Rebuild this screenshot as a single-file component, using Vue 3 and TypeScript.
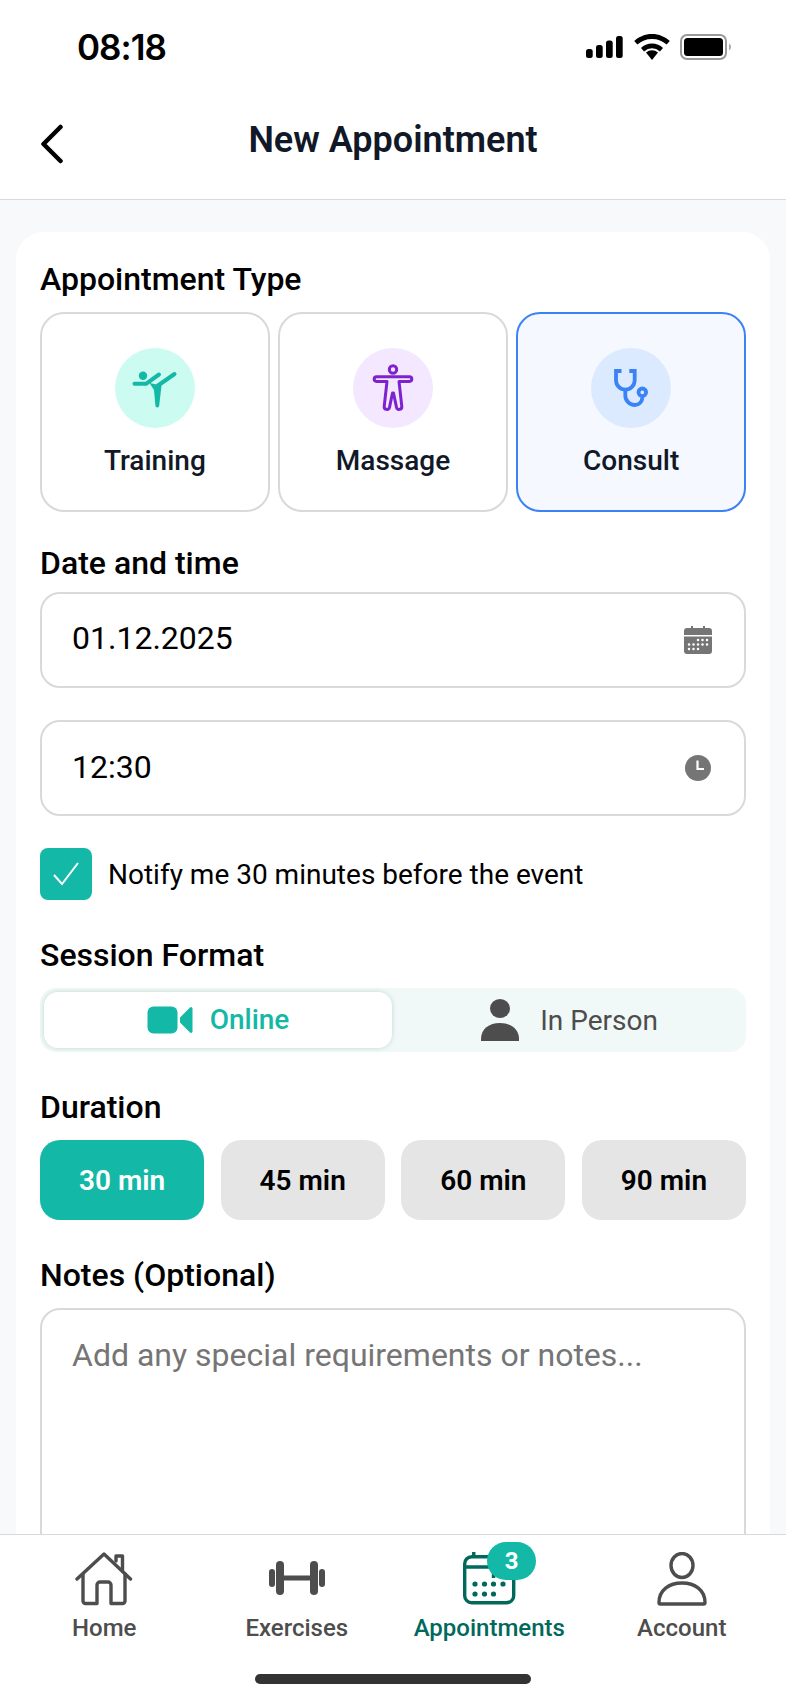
<template>
  <div class="page">
    <div class="status-bar">
      <span class="clock">08:18</span>
      <div class="status-icons">
        <svg class="signal" width="37" height="22" viewBox="0 0 37 22"><rect x="0" y="13" width="6.700" height="9" rx="2.500"/><rect x="10" y="9" width="6.700" height="13" rx="2.500"/><rect x="20" y="4.500" width="6.700" height="17.500" rx="2.500"/><rect x="30" y="0" width="6.700" height="22" rx="2.500"/></svg>
        <svg width="36" height="26" viewBox="0 0 36 26"><path d="M18 26l-6-7.500a9 9 0 0 1 12 0z"/><path d="M18 9.500c4.300 0 8.200 1.700 11 4.400l-3.100 3.500a11.700 11.700 0 0 0-15.800 0L7 13.900c2.800-2.700 6.700-4.400 11-4.400z"/><path d="M18 0c6.900 0 13.200 2.700 17.800 7l-3.200 3.600A21 21 0 0 0 18 4.900 21 21 0 0 0 3.400 10.600L.2 7C4.800 2.700 11.100 0 18 0z"/></svg>
        <svg width="54" height="26" viewBox="0 0 54 26"><rect x="1" y="1" width="45" height="24" rx="6" fill="none" stroke="#999" stroke-width="2"/><rect x="4" y="4" width="39" height="18" rx="3.500"/><path d="M49 9.500a4 4 0 0 1 0 7z" fill="#aaa"/></svg>
      </div>
    </div>

    <header class="top-bar">
      <svg class="back" width="24" height="40" viewBox="0 0 24 40"><path d="M21.500 3L4.500 20l17 17" fill="none" stroke="#000" stroke-width="4.500" stroke-linecap="round" stroke-linejoin="round"/></svg>
      <h1 class="title">New Appointment</h1>
    </header>

    <main class="content">
      <div class="card">
        <div class="label">Appointment Type</div>
        <div class="types">
          <div v-for="t in types" :key="t.key" class="type" :class="{ 'type-on': t.key === 'consult' }">
            <div class="type-icon" :class="'tint-' + t.key">
              <svg v-if="t.key === 'training'" width="48" height="48" viewBox="0 0 48 48">
                <circle cx="12" cy="11.700" r="4.200" fill="#14b8a6"/>
                <path d="M3.500 19.800H15L28 10.500M43.500 10L27 21.500" fill="none" stroke="#14b8a6" stroke-width="4" stroke-linecap="round" stroke-linejoin="round"/>
                <path d="M18.500 19L30.500 21.500 28.200 41.500a1.900 1.900 0 0 1-3.800 0L23 26z" fill="#14b8a6"/>
              </svg>
              <svg v-else-if="t.key === 'massage'" width="48" height="48" viewBox="0 0 48 48">
                <g fill="none" stroke="#7e22ce" stroke-width="3" stroke-linejoin="round">
                  <circle cx="24" cy="5.500" r="3.700"/>
                  <path d="M7.500 12.800H40.500a2.300 2.300 0 0 1 0 4.600H30L32.800 42.500a2.700 2.700 0 0 1-5.300.9L24.500 29h-1L20.500 43.400a2.700 2.700 0 0 1-5.300-.9L18 17.400H7.500a2.300 2.300 0 0 1 0-4.600z"/>
                </g>
              </svg>
              <svg v-else width="48" height="48" viewBox="0 0 48 48">
                <g fill="none" stroke="#3b82f6" stroke-width="3.800">
                  <path d="M14.500 7H9V16.300a9.300 9.300 0 0 0 18.700 0V7H22.300"/>
                  <path d="M18.300 26v5.500a9.500 9.500 0 0 0 9.500 9.500c4.500 0 7.500-3.500 7.500-7.500"/>
                  <circle cx="35.300" cy="28.300" r="3.800"/>
                </g>
              </svg>
            </div>
            <span class="type-name">{{ t.label }}</span>
          </div>
        </div>

        <div class="label label-date">Date and time</div>
        <div class="field">
          <span class="field-text">01.12.2025</span>
          <svg width="28" height="28" viewBox="0 0 28 28">
            <path d="M7 0h2v3H7zM19 0h2v3h-2z" fill="#757575"/>
            <path d="M3 2h22a3 3 0 0 1 3 3v4H0V5a3 3 0 0 1 3-3zM0 10.500h28V25a3 3 0 0 1-3 3H3a3 3 0 0 1-3-3z" fill="#757575"/>
            <g fill="#fff"><circle v-for="d in calDots" :key="d[0] + '-' + d[1]" :cx="d[0]" :cy="d[1]" r="1.250"/></g>
          </svg>
        </div>
        <div class="field field-next">
          <span class="field-text">12:30</span>
          <svg width="28" height="28" viewBox="0 0 28 28">
            <circle cx="14" cy="14" r="13" fill="#757575"/>
            <path d="M13.500 6.500v8.500h6.500" fill="none" stroke="#fff" stroke-width="2.200"/>
          </svg>
        </div>

        <div class="notify">
          <div class="check">
            <svg width="28" height="24" viewBox="0 0 28 24"><path d="M2 13l8 9L26 1" fill="none" stroke="#fff" stroke-width="2"/></svg>
          </div>
          <span>Notify me 30 minutes before the event</span>
        </div>

        <div class="label label-gap">Session Format</div>
        <div class="segment">
          <div class="seg-tab seg-on">
            <svg width="46" height="28" viewBox="0 0 46 28"><rect x="0.500" y="0.500" width="30" height="27" rx="6" fill="#14b8a6"/><path d="M33 11.500L43 1.500a1.500 1.500 0 0 1 2.500 1V25.500a1.500 1.500 0 0 1-2.500 1l-10-10z" fill="#14b8a6"/></svg>
            <span class="seg-text">Online</span>
          </div>
          <div class="seg-tab seg-off">
            <svg width="40" height="42" viewBox="0 0 40 42"><ellipse cx="20" cy="9.500" rx="10" ry="9.500" fill="#4d4d4d"/><path d="M1 42v-2C1 30 9 24 20 24s19 6 19 16v2z" fill="#4d4d4d"/></svg>
            <span>In Person</span>
          </div>
        </div>

        <div class="label label-gap">Duration</div>
        <div class="durations">
          <div v-for="(d, i) in durations" :key="d" class="dur" :class="{ 'dur-on': i === 0 }">{{ d }}</div>
        </div>

        <div class="label label-gap">Notes (Optional)</div>
        <div class="notes">Add any special requirements or notes...</div>
      </div>
    </main>

    <nav class="tabs">
      <div class="tab">
        <svg width="58" height="54" viewBox="0 0 58 54" fill="none" stroke="#4d4d4d" stroke-width="3.400" stroke-linecap="round" stroke-linejoin="round">
          <path d="M2 27L29 2l26.500 25"/>
          <path d="M41 9V4h6.500v15"/>
          <path d="M8 22v27a2.500 2.500 0 0 0 2.500 2.500H22V33a3 3 0 0 1 3-3h8a3 3 0 0 1 3 3v18.500h11.500A2.500 2.500 0 0 0 50 49V22"/>
        </svg>
        <span>Home</span>
      </div>
      <div class="tab">
        <svg width="58" height="54" viewBox="0 0 58 54" fill="#4d4d4d">
          <rect x="1" y="17" width="6" height="18" rx="3"/>
          <rect x="8" y="9" width="8" height="34" rx="4"/>
          <rect x="16" y="23.500" width="26" height="5"/>
          <rect x="42" y="9" width="8" height="34" rx="4"/>
          <rect x="51" y="17" width="6" height="18" rx="3"/>
        </svg>
        <span>Exercises</span>
      </div>
      <div class="tab tab-on">
        <div class="tab-icon">
          <svg width="54" height="54" viewBox="0 0 54 54" fill="none" stroke="#00695c" stroke-width="3.400">
            <rect x="2.700" y="4.700" width="49" height="46" rx="7"/>
            <path d="M2.700 15h49M11.750 0v5M31.500 15v11"/>
            <g fill="#00695c" stroke="none"><circle v-for="d in navDots" :key="d[0] + '-' + d[1]" :cx="d[0]" :cy="d[1]" r="2.600"/></g>
          </svg>
          <span class="badge">3</span>
        </div>
        <span>Appointments</span>
      </div>
      <div class="tab">
        <svg width="50" height="54" viewBox="0 0 50 54" fill="none" stroke="#4d4d4d" stroke-width="3.400" stroke-linejoin="round">
          <ellipse cx="25" cy="13.500" rx="11" ry="12"/>
          <path d="M2 50.500C2 38 12 31 25 31s23 7 23 19.500c0 1-.5 1.500-1.500 1.500h-43C2.500 52 2 51.500 2 50.500z"/>
        </svg>
        <span>Account</span>
      </div>
      <div class="home-bar"></div>
    </nav>
  </div>
</template>

<script setup lang="ts">
const types = [
  { key: 'training', label: 'Training' },
  { key: 'massage', label: 'Massage' },
  { key: 'consult', label: 'Consult' },
]

const durations = ['30 min', '45 min', '60 min', '90 min']

const calDots: number[][] = [
  [14, 14], [18.500, 14], [23, 14],
  [5, 18.500], [9.500, 18.500], [14, 18.500], [18.500, 18.500], [23, 18.500],
  [5, 23], [9.500, 23], [14, 23],
]

const navDots: number[][] = [
  [13, 32], [22.500, 32], [31.500, 32], [41, 32],
  [13, 42], [22.500, 42], [31.500, 42],
]
</script>

<style>
html, body {
  margin: 0;
  background: #fff;
}
</style>

<style scoped>
.page {
  width: 786px;
  height: 1704px;
  display: flex;
  flex-direction: column;
  overflow: hidden;
  background: #f8f9fb;
  font-family: Roboto, "Liberation Sans", sans-serif;
  color: #000;
}

.status-bar {
  height: 92px;
  flex-shrink: 0;
  background: #fff;
  display: flex;
  justify-content: space-between;
  align-items: center;
  padding: 2px 52px 0 77px;
  box-sizing: border-box;
}

.clock {
  font-family: Inter, sans-serif;
  font-size: 35px;
  font-weight: 600;
  letter-spacing: -1px;
  line-height: 1;
}

.status-icons {
  display: flex;
  align-items: center;
  gap: 10px;
}

.signal {
  margin-right: 1px;
}

.top-bar {
  height: 107px;
  flex-shrink: 0;
  background: #fff;
  border-bottom: 1px solid #d9d9d9;
  display: flex;
  align-items: center;
  justify-content: center;
  position: relative;
}

.back {
  position: absolute;
  left: 39px;
  top: 32px;
}

.title {
  margin: 0 0 12px;
  font-size: 36px;
  font-weight: 600;
  color: #111827;
  line-height: 1;
}

.content {
  flex: 1;
  min-height: 0;
  overflow: hidden;
  padding: 32px 16px 0;
}

.card {
  background: #fff;
  border-radius: 28px;
  padding: 27px 24px 40px;
}

.label {
  font-size: 32px;
  font-weight: 500;
  line-height: 40px;
}

.label-date {
  margin-top: 31px;
}

.label-gap {
  margin-top: 35px;
}

.types {
  margin-top: 13px;
  display: grid;
  grid-template-columns: repeat(3, 1fr);
  gap: 8.500px;
}

.type {
  height: 200px;
  box-sizing: border-box;
  border: 2px solid #d9d9d9;
  border-radius: 24px;
  display: flex;
  flex-direction: column;
  align-items: center;
  padding-top: 34px;
}

.type-on {
  border-color: #3b82f6;
  background: #f5f8ff;
}

.type-icon {
  width: 80px;
  height: 80px;
  border-radius: 50%;
  display: flex;
  align-items: center;
  justify-content: center;
}

.tint-training { background: #ccfbf1; }
.tint-massage { background: #f3e8ff; }
.tint-consult { background: #dbeafe; }

.type-name {
  margin-top: 15px;
  font-size: 28px;
  font-weight: 500;
  line-height: 36px;
  color: #111827;
}

.field {
  margin-top: 9px;
  height: 96px;
  box-sizing: border-box;
  border: 2px solid #d9d9d9;
  border-radius: 20px;
  padding: 0 32px 0 30px;
  display: flex;
  align-items: center;
  justify-content: space-between;
  font-size: 32px;
}

.field-text {
  padding-bottom: 4px;
}

.field-next {
  margin-top: 32px;
}

.field-next .field-text {
  padding-bottom: 2px;
}

.notify {
  margin-top: 32px;
  display: flex;
  align-items: center;
  gap: 16px;
  font-size: 28px;
}

.check {
  width: 52px;
  height: 52px;
  border-radius: 8px;
  background: #14b8a6;
  display: flex;
  align-items: center;
  justify-content: center;
}

.segment {
  margin-top: 13px;
  height: 64px;
  box-sizing: border-box;
  padding: 4px;
  border-radius: 16px;
  background: #f0f9f7;
  display: grid;
  grid-template-columns: 348px 1fr;
}

.seg-tab {
  display: flex;
  align-items: center;
  justify-content: center;
  gap: 17px;
  font-size: 28px;
  color: #4d4d4d;
}

.seg-text {
  padding-bottom: 2px;
}

.seg-on {
  background: #fff;
  border-radius: 14px;
  box-shadow: 0 0 5px rgba(0, 80, 70, 0.2);
  color: #14b8a6;
  font-weight: 500;
}

.seg-off {
  gap: 20px;
  padding-left: 4px;
}

.durations {
  margin-top: 13px;
  display: grid;
  grid-template-columns: repeat(4, 1fr);
  gap: 16.500px;
}

.dur {
  height: 80px;
  border-radius: 20px;
  background: #e5e5e5;
  display: flex;
  align-items: center;
  justify-content: center;
  font-size: 28px;
  font-weight: 600;
}

.dur-on {
  background: #14b8a6;
  color: #fff;
}

.notes {
  margin-top: 13px;
  height: 400px;
  box-sizing: border-box;
  border: 2px solid #d9d9d9;
  border-radius: 20px;
  padding: 20px 30px;
  font-size: 32px;
  line-height: 50px;
  color: #757575;
}

.tabs {
  height: 170px;
  flex-shrink: 0;
  box-sizing: border-box;
  background: #fff;
  border-top: 1px solid #d9d9d9;
  position: relative;
  display: grid;
  grid-template-columns: repeat(4, 192.500px);
  justify-content: center;
  align-items: start;
  padding-top: 17px;
}

.tab {
  display: flex;
  flex-direction: column;
  align-items: center;
  gap: 6px;
  font-size: 24px;
  font-weight: 500;
  line-height: 32px;
  color: #4d4d4d;
}

.tab-on {
  color: #00695c;
}

.tab-icon {
  position: relative;
  height: 54px;
}

.badge {
  position: absolute;
  left: 25px;
  top: -10px;
  width: 49px;
  height: 38px;
  border-radius: 19px;
  background: #14b8a6;
  color: #fff;
  font-size: 24px;
  font-weight: 700;
  line-height: 38px;
  text-align: center;
}

.home-bar {
  position: absolute;
  left: 255px;
  top: 139px;
  width: 276px;
  height: 10px;
  border-radius: 5px;
  background: #333;
}
</style>
